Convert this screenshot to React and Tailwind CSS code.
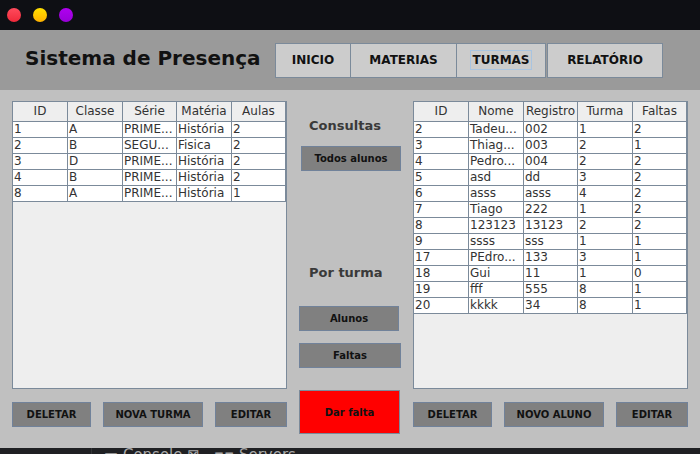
import React from "react";

const turmas = [
  ["1", "A", "PRIME...", "História", "2"],
  ["2", "B", "SEGU...", "Fisica", "2"],
  ["3", "D", "PRIME...", "História", "2"],
  ["4", "B", "PRIME...", "História", "2"],
  ["8", "A", "PRIME...", "História", "1"],
];

const alunos = [
  ["2", "Tadeu...", "002", "1", "2"],
  ["3", "Thiag...", "003", "2", "1"],
  ["4", "Pedro...", "004", "2", "2"],
  ["5", "asd", "dd", "3", "2"],
  ["6", "asss", "asss", "4", "2"],
  ["7", "Tiago", "222", "1", "2"],
  ["8", "123123", "13123", "2", "2"],
  ["9", "ssss", "sss", "1", "1"],
  ["17", "PEdro...", "133", "3", "1"],
  ["18", "Gui", "11", "1", "0"],
  ["19", "fff", "555", "8", "1"],
  ["20", "kkkk", "34", "8", "1"],
];

const colW = ["w-[55px]", "w-[55px]", "w-[54px]", "w-[55px]", "w-[54px]"];

function DataTable({ headers, rows }) {
  return (
    <div className="h-[288px] w-[275px] border border-[#7b8a9a] bg-[#eeeeee] overflow-hidden">
      {/* header */}
      <div className="flex h-[20px] bg-[#eeeeee]">
        {headers.map((h, i) => (
          <div
            key={h}
            className={`${colW[i]} shrink-0 border-r border-b border-[#7b8a9a] text-center leading-[19px] whitespace-nowrap overflow-hidden text-[12px] text-[#333333]`}
          >
            {h}
          </div>
        ))}
      </div>
      {rows.map((r, ri) => (
        <div key={ri} className="flex h-[16px] bg-white w-[273px]">
          {r.map((c, ci) => (
            <div
              key={ci}
              className={`${colW[ci]} shrink-0 border-r border-b border-[#7b8a9a] pl-[1px] leading-[15px] whitespace-nowrap overflow-hidden text-[12px] text-[#333333]`}
            >
              {c}
            </div>
          ))}
        </div>
      ))}
    </div>
  );
}

function GrayButton({ label, className = "" }) {
  return (
    <div
      className={`h-[25px] bg-[#808080] border border-[#71829a] flex items-center justify-center text-[10px] font-bold text-[#111111] ${className}`}
    >
      {label}
    </div>
  );
}

function NavButton({ label, className = "", focused }) {
  return (
    <div
      className={`h-[35px] bg-[#cccccc] border border-[#7b8a9a] flex items-center justify-center text-[12px] font-bold text-[#111111] ${className}`}
    >
      <span className={focused ? "outline outline-1 outline-[#a9c4e0] px-[1px]" : ""}>{label}</span>
    </div>
  );
}

export default function App() {
  return (
    <div
      className="w-[700px] h-[454px] overflow-hidden flex flex-col bg-[#c0c0c0]"
      style={{ fontFamily: '"DejaVu Sans", sans-serif' }}
    >
      {/* Title bar */}
      <div className="h-[30px] bg-[#0e0f14] flex items-center pl-[7px] gap-[12px] shrink-0">
        <div className="w-[14px] h-[14px] rounded-full bg-gradient-to-b from-[#ff4a5c] to-[#f0283a]" />
        <div className="w-[14px] h-[14px] rounded-full bg-gradient-to-b from-[#ffe000] to-[#ffb000]" />
        <div className="w-[14px] h-[14px] rounded-full bg-gradient-to-b from-[#b000f0] to-[#9800d8]" />
      </div>

      {/* Header */}
      <div className="h-[60px] bg-[#9a9a9a] flex items-center shrink-0">
        <h1 className="w-[275px] pl-[25px] mb-[5px] text-[20px] font-bold text-[#111111] whitespace-nowrap">
          Sistema de Presença
        </h1>
        <NavButton label="INICIO" className="w-[76px]" />
        <NavButton label="MATERIAS" className="w-[107px] -ml-px" />
        <NavButton label="TURMAS" className="w-[90px] -ml-px" focused />
        <NavButton label="RELATÓRIO" className="w-[116px] ml-[1px]" />
      </div>

      {/* Body */}
      <div className="flex-1 flex pl-[12px] pt-[11px]">
        {/* Left column */}
        <div className="flex flex-col w-[275px]">
          <DataTable headers={["ID", "Classe", "Série", "Matéria", "Aulas"]} rows={turmas} />
          <div className="flex gap-[12px] mt-[13px]">
            <GrayButton label="DELETAR" className="w-[79px]" />
            <GrayButton label="NOVA TURMA" className="w-[100px]" />
            <GrayButton label="EDITAR" className="w-[72px]" />
          </div>
        </div>

        {/* Middle column */}
        <div className="flex flex-col w-[126px] pl-[12px]">
          <div className="mt-[17px] pl-[10px] text-[13px] font-bold text-[#3a3a3a] leading-[16px]">Consultas</div>
          <GrayButton label="Todos alunos" className="w-[100px] ml-[2px] mt-[12px]" />
          <div className="mt-[94px] pl-[10px] text-[13px] font-bold text-[#3a3a3a] leading-[16px]">Por turma</div>
          <GrayButton label="Alunos" className="w-[100px] mt-[25px]" />
          <GrayButton label="Faltas" className="w-[102px] mt-[12px]" />
          <div className="w-[101px] h-[44px] mt-[22px] bg-[#ff0000] border border-[#7b8a9a] flex items-center justify-center text-[10px] font-bold text-[#111111]">
            Dar falta
          </div>
        </div>

        {/* Right column */}
        <div className="flex flex-col w-[275px]">
          <DataTable headers={["ID", "Nome", "Registro", "Turma", "Faltas"]} rows={alunos} />
          <div className="flex gap-[12px] mt-[13px]">
            <GrayButton label="DELETAR" className="w-[79px]" />
            <GrayButton label="NOVO ALUNO" className="w-[100px]" />
            <GrayButton label="EDITAR" className="w-[72px]" />
          </div>
        </div>
      </div>

      {/* IDE strip peeking at bottom */}
      <div className="h-[6px] bg-[#1f2023] shrink-0 overflow-hidden flex items-start text-[15px] leading-[15px] text-[#a8a8a8]">
        <div className="w-[92px] h-full border-r border-[#333437]" />
        <span className="ml-[12px]">▭ Console ⊠</span>
        <span className="ml-[14px]">▪▪ Servers</span>
      </div>
    </div>
  );
}
